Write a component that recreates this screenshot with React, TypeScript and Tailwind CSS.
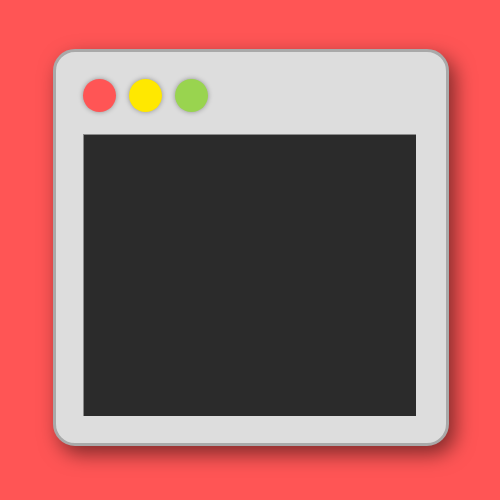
export default function App() {
  return (
    <div className="w-[500px] h-[500px] bg-[#ff5555] pl-[53px] pt-[49px]">
      <div className="w-[396px] h-[397px] rounded-[22px] border-[3px] border-[#a9a9a9] bg-[#dddddd] shadow-[6px_8px_20px_rgba(0,0,0,0.5)] pl-[27px] pr-[30px] pt-[27px] pb-[27px] flex flex-col gap-[22px]">
        <div className="flex gap-[13px]">
          <div className="w-[33px] h-[33px] rounded-full bg-[#ff5555] shadow-[0_0_5px_rgba(0,0,0,0.35)]" />
          <div className="w-[33px] h-[33px] rounded-full bg-[#ffe800] shadow-[0_0_5px_rgba(0,0,0,0.35)]" />
          <div className="w-[33px] h-[33px] rounded-full bg-[#99d44f] shadow-[0_0_5px_rgba(0,0,0,0.35)]" />
        </div>
        <div className="flex-1 bg-[#2b2b2b] border-t border-l border-[#8a8a8a]" />
      </div>
    </div>
  );
}
